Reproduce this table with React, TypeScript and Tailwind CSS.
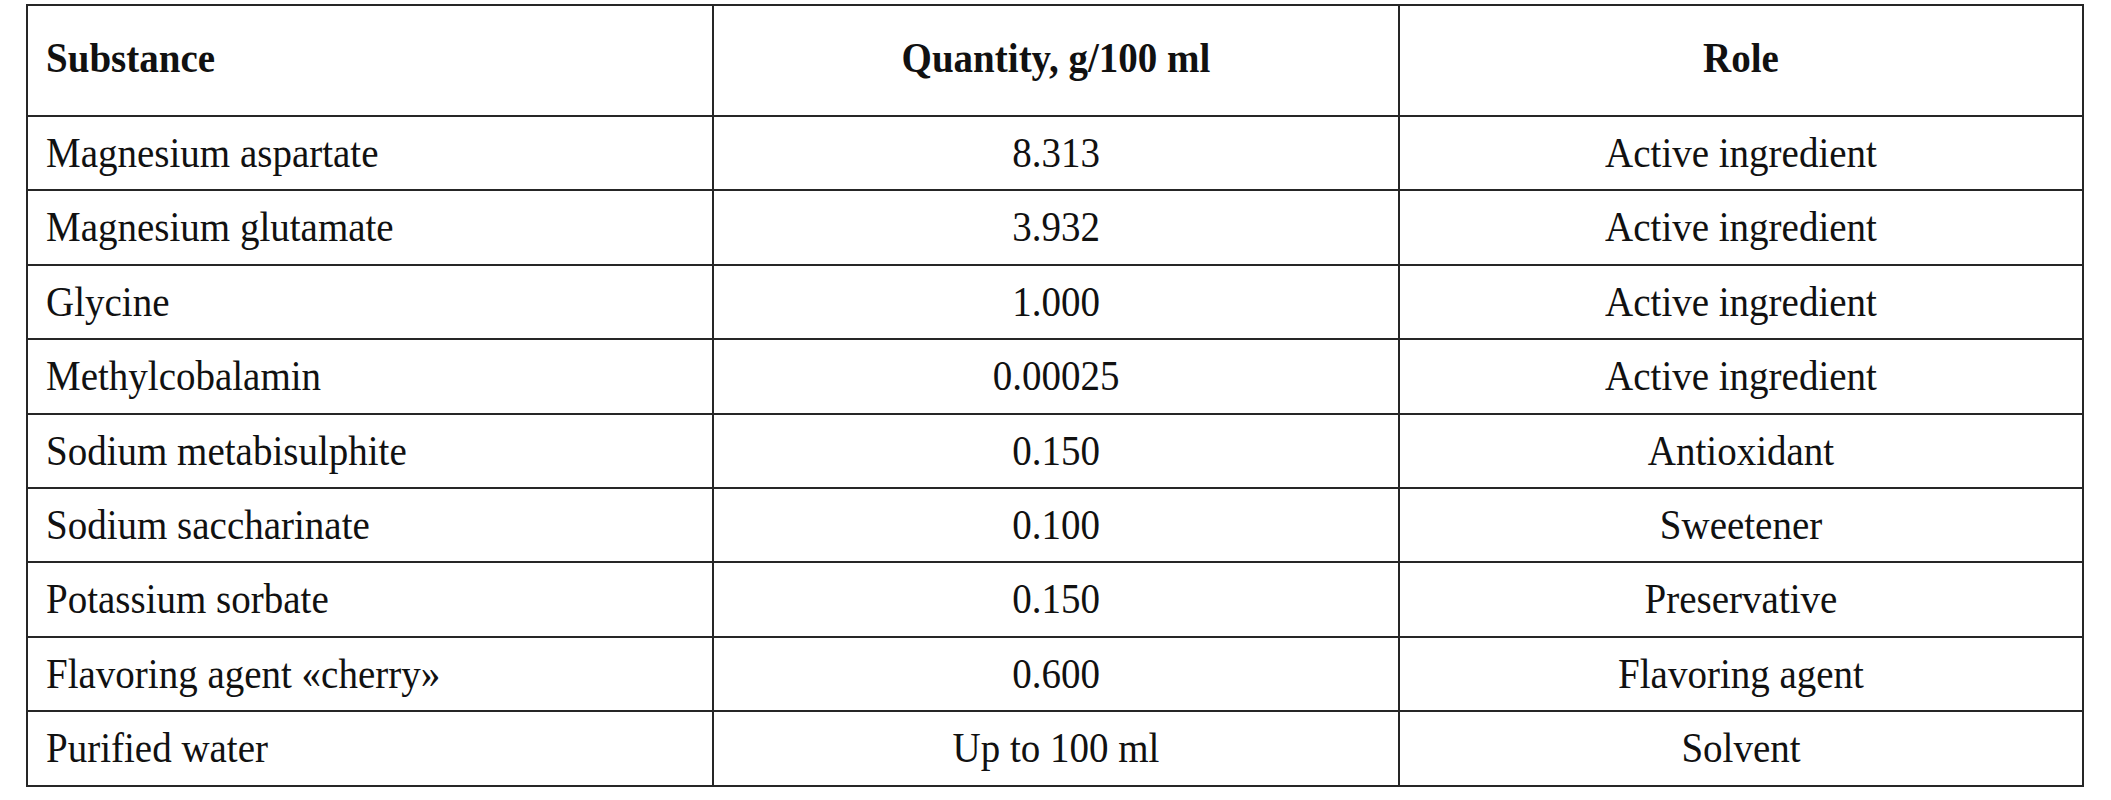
const rows: [string, string, string][] = [
  ["Magnesium aspartate", "8.313", "Active ingredient"],
  ["Magnesium glutamate", "3.932", "Active ingredient"],
  ["Glycine", "1.000", "Active ingredient"],
  ["Methylcobalamin", "0.00025", "Active ingredient"],
  ["Sodium metabisulphite", "0.150", "Antioxidant"],
  ["Sodium saccharinate", "0.100", "Sweetener"],
  ["Potassium sorbate", "0.150", "Preservative"],
  ["Flavoring agent «cherry»", "0.600", "Flavoring agent"],
  ["Purified water", "Up to 100 ml", "Solvent"],
];

const cell = "border-2 border-[#262626] align-middle p-0";

function Txt({ children }: { children: React.ReactNode }) {
  return <span className="inline-block scale-y-[1.08]">{children}</span>;
}

export default function App() {
  return (
    <div className="w-[2111px] h-[800px] bg-white pt-[4px] pl-[26px] font-['Liberation_Serif','Times_New_Roman',serif] text-[39px] text-[#111]">
      <table className="border-collapse table-fixed w-[2056px]">
        <colgroup>
          <col className="w-[686px]" />
          <col className="w-[686px]" />
          <col className="w-[684px]" />
        </colgroup>
        <thead>
          <tr className="h-[111px]">
            <th className={`${cell} text-left font-bold pl-[18px] pb-[4px]`}>
              <Txt>Substance</Txt>
            </th>
            <th className={`${cell} text-center font-bold pb-[4px]`}>
              <Txt>Quantity, g/100 ml</Txt>
            </th>
            <th className={`${cell} text-center font-bold pb-[4px]`}>
              <Txt>Role</Txt>
            </th>
          </tr>
        </thead>
        <tbody>
          {rows.map(([name, qty, role]) => (
            <tr key={name} className="h-[74.4px]">
              <td className={`${cell} text-left pl-[18px]`}>
                <Txt>{name}</Txt>
              </td>
              <td className={`${cell} text-center`}>
                <Txt>{qty}</Txt>
              </td>
              <td className={`${cell} text-center`}>
                <Txt>{role}</Txt>
              </td>
            </tr>
          ))}
        </tbody>
      </table>
    </div>
  );
}
